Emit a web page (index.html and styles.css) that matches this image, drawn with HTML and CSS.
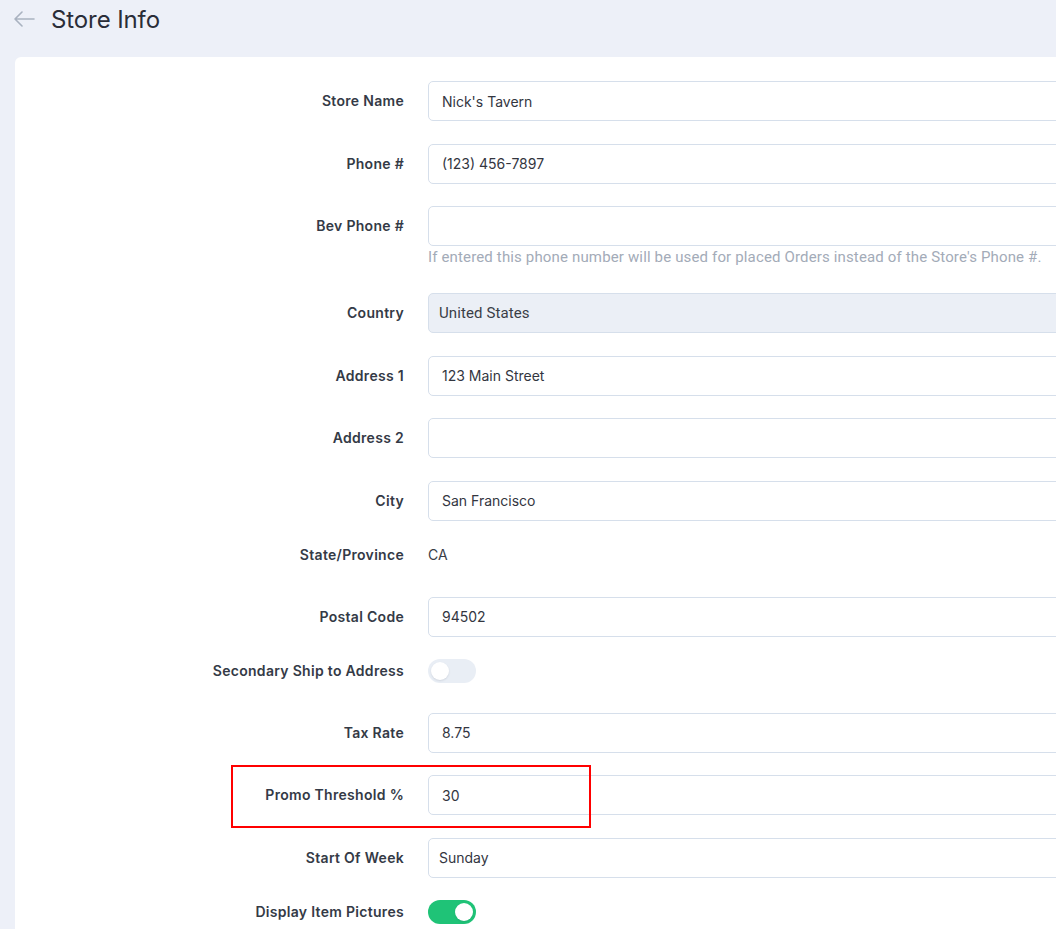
FILE: index.html
```html
<!DOCTYPE html>
<html lang="en">
<head>
<meta charset="utf-8">
<title>Store Info</title>
<link rel="stylesheet" href="styles.css">
</head>
<body>
<div class="page">
  <header class="page-header">
    <svg class="back" width="22" height="16" viewBox="0 0 22 16" aria-hidden="true">
      <path d="M21 8H2M9 1L2 8l7 7" fill="none" stroke="#a9b2c0" stroke-width="1.6" stroke-linecap="round" stroke-linejoin="round"/>
    </svg>
    <h1 class="title">Store Info</h1>
  </header>

  <main class="card">
    <div class="row">
      <label class="label">Store Name</label>
      <div class="field"><div class="input">Nick's Tavern</div></div>
    </div>
    <div class="row">
      <label class="label">Phone #</label>
      <div class="field"><div class="input">(123) 456-7897</div></div>
    </div>
    <div class="row row-hint">
      <label class="label label-top">Bev Phone #</label>
      <div class="field">
        <div class="input"></div>
        <p class="hint">If entered this phone number will be used for placed Orders instead of the Store's Phone #.</p>
      </div>
    </div>
    <div class="row">
      <label class="label">Country</label>
      <div class="field"><div class="input select disabled">United States</div></div>
    </div>
    <div class="row">
      <label class="label">Address 1</label>
      <div class="field"><div class="input">123 Main Street</div></div>
    </div>
    <div class="row">
      <label class="label">Address 2</label>
      <div class="field"><div class="input"></div></div>
    </div>
    <div class="row">
      <label class="label">City</label>
      <div class="field"><div class="input">San Francisco</div></div>
    </div>
    <div class="row row-plain">
      <label class="label">State/Province</label>
      <div class="field"><span class="static">CA</span></div>
    </div>
    <div class="row">
      <label class="label">Postal Code</label>
      <div class="field"><div class="input">94502</div></div>
    </div>
    <div class="row row-plain">
      <label class="label">Secondary Ship to Address</label>
      <div class="field"><span class="toggle"><span class="knob"></span></span></div>
    </div>
    <div class="row">
      <label class="label">Tax Rate</label>
      <div class="field"><div class="input">8.75</div></div>
    </div>
    <div class="row highlighted">
      <label class="label">Promo Threshold %</label>
      <div class="field"><div class="input">30</div></div>
      <span class="annotation"></span>
    </div>
    <div class="row">
      <label class="label">Start Of Week</label>
      <div class="field"><div class="input select">Sunday</div></div>
    </div>
    <div class="row row-plain">
      <label class="label">Display Item Pictures</label>
      <div class="field"><span class="toggle on"><span class="knob"></span></span></div>
    </div>
  </main>
</div>
</body>
</html>
```

FILE: styles.css
```css
html, body {
  margin: 0;
  padding: 0;
  overflow: hidden;
  background: #edf0f8;
}

body {
  font-family: Inter, "Noto Sans", Arial, sans-serif;
  color: #2b2f3a;
  width: 1056px;
  height: 929px;
}

.page {
  padding: 0 0 0 15px;
}

.page-header {
  display: flex;
  align-items: center;
  height: 38px;
}

.back {
  margin-left: -2px;
  margin-right: 16px;
}

.title {
  margin: 0;
  font-size: 24px;
  font-weight: 400;
  color: #2a2d38;
  letter-spacing: -0.1px;
}

.card {
  margin-top: 19px;
  width: 1250px;
  min-height: 1000px;
  background: #ffffff;
  border-radius: 6px;
  padding-top: 24px;
  box-sizing: border-box;
}

.row {
  position: relative;
  display: grid;
  grid-template-columns: 389px 1fr;
  column-gap: 24px;
  align-items: center;
  margin-bottom: 22.5px;
}

.row-hint {
  align-items: start;
}

.row-plain {
  align-items: start;
  min-height: 31px;
}

.label {
  text-align: right;
  font-size: 14px;
  font-weight: 600;
  color: #343a46;
  line-height: 24px;
  letter-spacing: 0.3px;
}

.label-top {
  margin-top: 8px;
}

.input {
  height: 40px;
  box-sizing: border-box;
  border: 1px solid #d6dfeb;
  border-radius: 5px;
  padding: 0 13px;
  display: flex;
  align-items: center;
  font-size: 14px;
  color: #33363f;
}

.select {
  padding-left: 10px;
}

.disabled {
  background: #ebeff6;
  font-family: Roboto, "Liberation Sans", Arial, sans-serif;
  font-size: 15px;
  letter-spacing: 0.1px;
  color: #3a3d46;
}

.hint {
  margin: 1px 0 3.5px;
  font-family: Roboto, "Liberation Sans", Arial, sans-serif;
  font-size: 15px;
  letter-spacing: 0.15px;
  line-height: 20px;
  color: #a3abb8;
  white-space: nowrap;
}

.static {
  display: block;
  font-size: 14px;
  line-height: 24px;
  color: #3a3d46;
}

.toggle {
  display: block;
  position: relative;
  width: 48px;
  height: 24px;
  border-radius: 12px;
  background: #e9eef5;
}

.toggle .knob {
  position: absolute;
  top: 3px;
  left: 3px;
  width: 18px;
  height: 18px;
  border-radius: 50%;
  background: #ffffff;
  box-shadow: 0 1px 2px rgba(40, 50, 70, 0.12);
}

.toggle.on {
  background: #1fc377;
}

.toggle.on .knob {
  left: auto;
  right: 3px;
}

.annotation {
  position: absolute;
  left: 216px;
  top: -10px;
  width: 360px;
  height: 63px;
  box-sizing: border-box;
  border: 2px solid #ff0000;
  pointer-events: none;
}
```
